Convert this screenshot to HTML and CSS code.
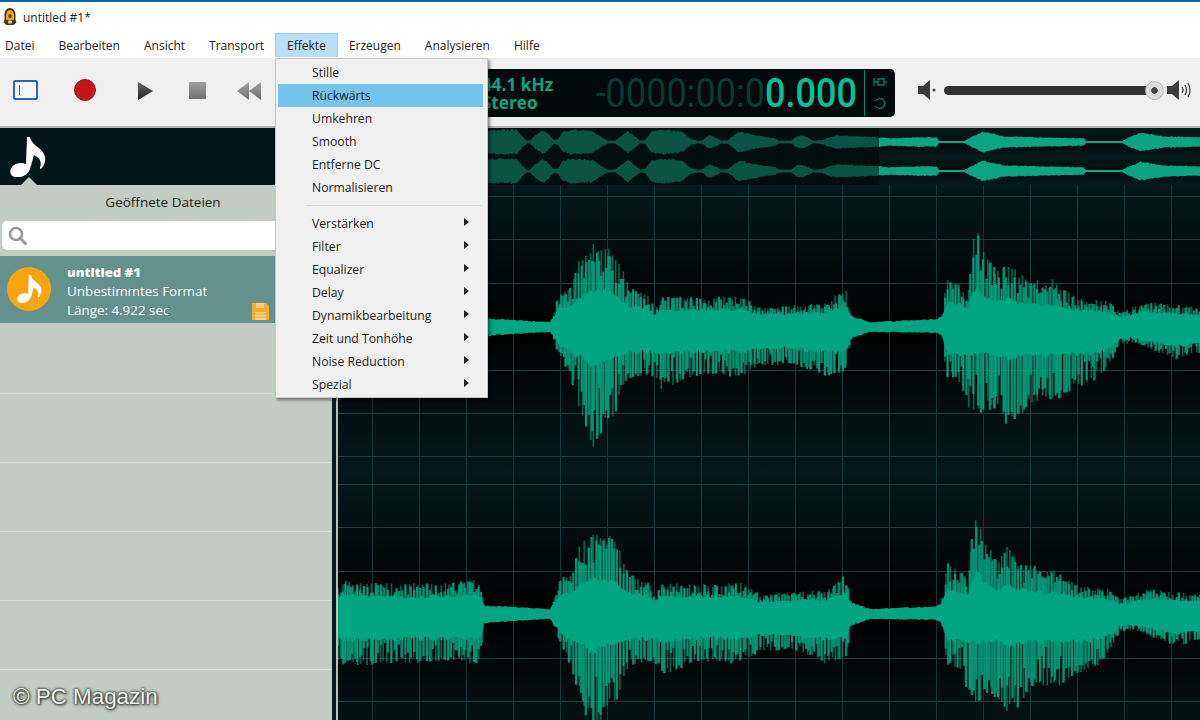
FILE: index.html
```html
<!DOCTYPE html>
<html lang="de">
<head>
  <meta charset="UTF-8">
  <title>untitled #1*</title>
  <link rel="stylesheet" href="styles.css">
</head>
<body>

  <div class="titlebar">
    <svg class="app-icon" viewBox="0 0 14 18">
      <path d="M7 0C3.500 0 1.500 3 1.500 7v5L.5 14.500l3 2.500h7l3-2.500-1-2.500V7C12.500 3 10.500 0 7 0z" fill="#4a3414"/>
      <path d="M3 8c0-3 1.500-6 4-6s4 3 4 6v4H3z" fill="#eaa924"/>
      <rect x="5.500" y="6" width="3" height="4" rx="1.500" fill="#4a3415"/>
      <rect x="5" y="12.500" width="4" height="3" rx="1" fill="#eccf95"/>
    </svg>
    <span>untitled #1*</span>
  </div>

  <nav class="menubar">
    <div class="menu-item">Datei</div>
    <div class="menu-item">Bearbeiten</div>
    <div class="menu-item">Ansicht</div>
    <div class="menu-item">Transport</div>
    <div class="menu-item active">Effekte</div>
    <div class="menu-item">Erzeugen</div>
    <div class="menu-item">Analysieren</div>
    <div class="menu-item">Hilfe</div>
  </nav>

  <div class="toolbar">
    <div class="sidebar-toggle"></div>
    <div class="btn-record"></div>
    <svg class="btn-play" viewBox="0 0 15 18"><path d="M0 0l15 9L0 18z" fill="url(#dark)"/></svg>
    <div class="btn-stop"></div>
    <svg class="btn-rewind" viewBox="0 0 24 18"><path d="M12 0v18L0 9zM24 0v18L12 9z" fill="url(#grey)"/></svg>

    <div class="lcd">
      <div class="lcd-format">44.1 kHz<br>Stereo</div>
      <div class="lcd-time"><div class="digits"><span class="dim">-0000:00:0</span><span class="lit">0.000</span></div></div>
      <div class="lcd-side">
        <svg viewBox="0 0 14 12" width="14" height="12"><path d="M1 2v8M1 6h4M5 3h6v6H5zM11 6h3" stroke="#0b7c62" stroke-width="1.400" fill="none"/></svg>
        <svg viewBox="0 0 14 14" width="14" height="14"><path d="M9 2.500a5 5 0 1 1-5 0" stroke="#0b7c62" stroke-width="1.400" fill="none" transform="rotate(-90 7 7)"/></svg>
      </div>
    </div>

    <div class="volume">
      <svg class="speaker" viewBox="0 0 18 20"><path d="M0 6h5l7-6v20l-7-6H0z" fill="#3c3c3c"/><circle cx="16" cy="10" r="1.500" fill="#3c3c3c"/></svg>
      <div class="slider"><div class="knob"></div></div>
      <svg class="speaker-loud" viewBox="0 0 24 20"><path d="M0 6h5l7-6v20l-7-6H0z" fill="#3c3c3c"/><path d="M15 7q2 3 0 6M18 5q3 5 0 10M21 3q4 7 0 14" stroke="#3c3c3c" stroke-width="1.300" fill="none"/></svg>
    </div>
  </div>

  <div class="workspace">
    <aside class="sidebar">
      <div class="sidebar-head">
        <svg class="note" viewBox="0 0 36 40"><path d="M17 0h3c1 5 5 8 10 12 6 5 7 12 2 19-1 1-2 1-2 0 2-6 0-10-6-13l-4 14c-2 6-8 9-15 8C0 39-1 34 2 30c3-4 9-5 14-3z" fill="#fff"/></svg>
      </div>
      <h2 class="sidebar-title">Geöffnete Dateien</h2>
      <div class="search">
        <svg viewBox="0 0 20 20" width="20" height="20"><circle cx="8" cy="8" r="6" stroke="#9a9a9a" stroke-width="2.600" fill="none"/><path d="M12.500 12.500l6 6" stroke="#9a9a9a" stroke-width="3"/></svg>
      </div>
      <div class="file-row selected">
        <div class="avatar">
          <svg viewBox="0 0 36 40" width="25" height="28"><path d="M17 0h3c1 5 5 8 10 12 6 5 7 12 2 19-1 1-2 1-2 0 2-6 0-10-6-13l-4 14c-2 6-8 9-15 8C0 39-1 34 2 30c3-4 9-5 14-3z" fill="#fff"/></svg>
        </div>
        <div class="file-text">
          <strong>untitled #1</strong>
          <span>Unbestimmtes Format</span>
          <span>Länge: 4.922 sec</span>
        </div>
        <svg class="floppy" viewBox="0 0 17 17"><path d="M0 0h14l3 3v14H0z" fill="#f2ab32"/><path d="M4 0h8v5H4zM3 9h11v8H3z" fill="#fbd28a"/><path d="M3 11h11M3 14h11" stroke="#f2ab32"/></svg>
      </div>
      <div class="file-row"></div>
      <div class="file-row"></div>
      <div class="file-row"></div>
      <div class="file-row"></div>
      <div class="file-row"></div>
      <div class="watermark">© PC Magazin</div>
    </aside>

    <main class="editor">
      <div class="overview">
        <div class="overview-dim"><svg id="overview-a" width="392" height="57"></svg></div>
        <div class="overview-lit"><svg id="overview-b" width="321" height="57"></svg></div>
      </div>
      <div class="channel"><svg id="wave-1" width="862" height="285"></svg></div>
      <div class="channel second"><svg id="wave-2" width="862" height="285"></svg></div>
    </main>
  </div>

  <div class="effects-menu">
    <div class="entry">Stille</div>
    <div class="entry hover">Rückwärts</div>
    <div class="entry">Umkehren</div>
    <div class="entry">Smooth</div>
    <div class="entry">Entferne DC</div>
    <div class="entry">Normalisieren</div>
    <div class="separator"></div>
    <div class="entry sub">Verstärken</div>
    <div class="entry sub">Filter</div>
    <div class="entry sub">Equalizer</div>
    <div class="entry sub">Delay</div>
    <div class="entry sub">Dynamikbearbeitung</div>
    <div class="entry sub">Zeit und Tonhöhe</div>
    <div class="entry sub">Noise Reduction</div>
    <div class="entry sub">Spezial</div>
  </div>

  <svg width="0" height="0" class="defs">
    <defs>
      <linearGradient id="dark" x1="0" y1="0" x2="0" y2="1"><stop offset="0" stop-color="#666"/><stop offset="1" stop-color="#222"/></linearGradient>
      <linearGradient id="grey" x1="0" y1="0" x2="0" y2="1"><stop offset="0" stop-color="#a2a2a2"/><stop offset="1" stop-color="#6e6e6e"/></linearGradient>
    </defs>
  </svg>

  <script src="script.js"></script>
</body>
</html>
```

FILE: styles.css
```css
* {
  box-sizing: border-box;
}

html, body {
  height: 720px;
  overflow: hidden;
}

body {
  margin: 0;
  font-family: "Open Sans", "Noto Sans", sans-serif;
  font-size: 12px;
  color: #222;
  background: #fff;
  display: flex;
  flex-direction: column;
  position: relative;
}

.defs {
  position: absolute;
}

.titlebar {
  height: 32px;
  border-top: 2px solid #0b66ae;
  display: flex;
  align-items: center;
  padding-left: 3px;
  gap: 6px;
}

.app-icon {
  width: 14px;
  height: 18px;
}

.menubar {
  height: 26px;
  display: flex;
}

.menu-item {
  padding: 0 12px;
  line-height: 27px;
}

.menu-item:first-child {
  padding-left: 5px;
}

.menu-item.active {
  height: 24px;
  margin: 1px -1px 0 -1px;
  background: #b9def5;
  border: 1px solid #93cbee;
  border-bottom-color: #b9def5;
  line-height: 24px;
  padding: 0 11px;
}

.toolbar {
  height: 70px;
  background: #f0f0f0;
  border-bottom: 2px solid #b2b2b2;
  display: flex;
  align-items: center;
  padding-left: 13px;
  position: relative;
}

.sidebar-toggle {
  width: 25px;
  height: 20px;
  border: 2px solid #2e62c4;
  border-radius: 2px;
  background: linear-gradient(#2e62c4, #2e62c4) 4px 3px / 1px 10px no-repeat, #f4f6fb;
  margin-bottom: 4px;
}

.btn-record {
  width: 22px;
  height: 22px;
  border-radius: 50%;
  background: #c3161b;
  border: 1px solid #a81015;
  margin: 0 0 4px 36px;
}

.btn-play {
  width: 15px;
  height: 18px;
  margin: 0 0 3px 42px;
}

.btn-stop {
  width: 17px;
  height: 17px;
  background: linear-gradient(#a0a0a0, #707070);
  margin: 0 0 3px 36px;
}

.btn-rewind {
  width: 24px;
  height: 18px;
  margin: 0 0 3px 31px;
}

.lcd {
  width: 420px;
  height: 48px;
  margin: 2px 0 0 214px;
  background: #020a0c;
  border-radius: 5px;
  display: flex;
  align-items: center;
  color: #0aa582;
  overflow: hidden;
}

.lcd-format {
  width: 100px;
  padding-left: 7px;
  font-size: 18px;
  font-weight: 700;
  line-height: 18px;
  white-space: nowrap;
  transform: scaleX(.96);
  transform-origin: left center;
}

.lcd-time {
  flex: 1;
  display: flex;
  justify-content: flex-end;
  padding-right: 7px;
  min-width: 0;
}

.digits {
  font-family: "Roboto", sans-serif;
  font-size: 41px;
  white-space: nowrap;
  transform: scaleX(.88);
  transform-origin: right center;
}

.digits .dim {
  color: #0c3a33;
}

.digits .lit {
  color: #07c196;
  font-weight: 500;
}

.lcd-side {
  width: 31px;
  height: 46px;
  border-left: 1px solid #0b8468;
  display: flex;
  flex-direction: column;
  align-items: center;
  justify-content: center;
  gap: 8px;
}

.volume {
  display: flex;
  align-items: center;
  margin: 0 0 4px 23px;
}

.speaker {
  width: 18px;
  height: 20px;
}

.slider {
  width: 212px;
  height: 9px;
  margin: 0 11px 0 8px;
  background: #333;
  border-radius: 5px;
  position: relative;
}

.knob {
  position: absolute;
  right: -8px;
  top: -5px;
  width: 19px;
  height: 19px;
  border-radius: 50%;
  background: radial-gradient(circle, #444 0 3px, #d6d6d6 3.5px, #e6e6e6 100%);
  border: 1px solid #b4b4b4;
}

.speaker-loud {
  width: 24px;
  height: 20px;
}

.workspace {
  flex: 1;
  display: flex;
  min-height: 0;
}

.sidebar {
  width: 336px;
  flex: none;
  background: #c3ccc4;
  border-right: 4px solid #0e1a1a;
  position: relative;
}

.sidebar-head {
  height: 57px;
  background: #03171b;
  padding: 9px 0 0 10px;
  position: relative;
}

.sidebar-head::after {
  content: "";
  position: absolute;
  left: 21px;
  bottom: 0;
  border: 8px solid transparent;
  border-top: 0;
  border-bottom-color: #c3ccc4;
}

.note {
  width: 36px;
  height: 40px;
  display: block;
}

.sidebar-title {
  margin: 0;
  height: 36px;
  line-height: 35px;
  text-align: center;
  font-size: 13.5px;
  font-weight: 400;
  padding-right: 6px;
}

.search {
  height: 29px;
  margin-left: 2px;
  width: 290px;
  background: #fff;
  border-radius: 5px;
  padding: 5px 0 0 6px;
}

.file-row {
  height: 69px;
  border-bottom: 1px solid #d5dcd5;
  position: relative;
}

.file-row.selected {
  height: 67px;
  margin: 6px 0 2px;
  background: #64908e;
  border-bottom: 0;
  color: #fff;
  display: flex;
  align-items: center;
}

.avatar {
  width: 44px;
  height: 44px;
  border-radius: 50%;
  background: #f7a411;
  margin: 0 0 1px 7px;
  display: flex;
  align-items: center;
  justify-content: center;
}

.file-text {
  margin-left: 16px;
  padding-top: 4px;
  display: flex;
  flex-direction: column;
  line-height: 19px;
  font-size: 13.4px;
}

.file-text strong {
  font-weight: 800;
  font-size: 13px;
}

.floppy {
  position: absolute;
  left: 252px;
  top: 47px;
  width: 17px;
  height: 17px;
}

.watermark {
  position: absolute;
  left: 13px;
  top: 556px;
  font-family: "Liberation Sans", sans-serif;
  font-size: 22.4px;
  color: #f2f4f2;
  text-shadow: 0 0 3px #333, 0 0 2px #333, 1px 1px 3px #333;
}

.editor {
  flex: 1;
  min-width: 0;
  border-left: 2px solid #b4c0ba;
  background: #000;
}

.overview {
  height: 57px;
  display: flex;
  padding-left: 149px;
}

.overview-dim {
  width: 392px;
  background: #01100f;
}

.overview-lit {
  width: 321px;
  background: linear-gradient(#031a1c, #010b0c 30%, #031a1c 50%, #010b0c 75%, #031a1c);
}

.overview svg, .channel svg {
  display: block;
}

.channel {
  height: 285px;
  background:
    repeating-linear-gradient(90deg, transparent 0 34px, #12393a 34px 35px, transparent 35px 47px),
    repeating-linear-gradient(180deg, transparent 0 11px, #16403f 11px 12px, transparent 12px 43.4px),
    linear-gradient(#03191b, #000 50%, #03191b);
}

.channel.second {
  background:
    repeating-linear-gradient(90deg, transparent 0 34px, #12393a 34px 35px, transparent 35px 47px),
    repeating-linear-gradient(180deg, transparent 0 14px, #16403f 14px 15px, transparent 15px 43.4px),
    linear-gradient(#03191b, #000 50%, #03191b);
}

.effects-menu {
  position: absolute;
  left: 275px;
  top: 58px;
  width: 213px;
  height: 340px;
  padding: 2px;
  background: #f0f0f0;
  border: 1px solid #c8c8c8;
  box-shadow: 2px 2px 3px rgba(0, 0, 0, .45);
  font-size: 12.2px;
}

.entry {
  height: 23px;
  line-height: 24px;
  padding-left: 34px;
  width: 205px;
  position: relative;
}

.entry.hover {
  background: #74c3ee;
}

.entry.sub::after {
  content: "";
  position: absolute;
  right: 14px;
  top: 6px;
  border: 4px solid transparent;
  border-left: 5px solid #222;
  border-right: 0;
}

.separator {
  height: 13px;
  margin: 0 1px 0 28px;
  width: 176px;
  border-bottom: 1px solid #dcdcdc;
  transform: translateY(-6px);
}
```

FILE: script.js
```js
// envelope points: [x on screen, amplitude up, amplitude down]
const ENVELOPE = [
  [338, 30, 46], [345, 34, 52], [400, 30, 50], [450, 32, 48], [475, 36, 50], [481, 30, 48],
  [484, 9, 10], [500, 8, 8], [550, 5, 5],
  [553, 10, 8], [557, 30, 24], [567, 41, 44], [573, 44, 60], [578, 66, 80], [593, 85, 123],
  [607, 81, 96], [617, 70, 86], [625, 53, 60], [630, 40, 52], [647, 36, 48], [655, 18, 50],
  [660, 31, 63], [700, 30, 48], [740, 32, 50], [760, 20, 38], [795, 22, 38], [826, 24, 50],
  [838, 34, 46], [846, 40, 45], [851, 12, 12], [870, 5, 5], [937, 8, 6], [942, 12, 10],
  [947, 54, 53], [960, 44, 56], [968, 34, 80], [972, 80, 85], [977, 105, 95], [983, 80, 83],
  [990, 67, 84], [997, 57, 86], [1007, 70, 100], [1017, 57, 95], [1027, 49, 80], [1037, 50, 76],
  [1043, 39, 73], [1053, 49, 72], [1060, 40, 73], [1077, 30, 61], [1093, 27, 56], [1107, 27, 43],
  [1120, 15, 18], [1133, 20, 16], [1147, 25, 21], [1177, 22, 33], [1200, 20, 26]
];

const OVERVIEW_DIM = [
  [0, 12], [4, 13], [30, 13], [35, 6], [40, 1.5], [43, 1.5], [48, 7], [56, 13], [62, 8], [67, 2],
  [71, 3], [76, 11], [85, 13], [105, 12], [115, 5], [121, 1.5], [128, 1.5], [134, 6], [141, 12],
  [148, 6], [153, 1.5], [158, 2], [165, 12], [180, 13], [195, 11], [204, 3], [211, 1.5], [216, 2],
  [220, 6], [224, 7], [230, 4], [234, 1.5], [241, 2], [247, 7], [252, 11], [270, 7], [288, 4],
  [292, 1.5], [304, 1.5], [310, 6], [315, 7], [322, 4], [326, 1.5], [335, 2], [342, 5], [350, 7],
  [392, 5]
];

const OVERVIEW_LIT = [
  [0, 5], [10, 4], [40, 5], [58, 5], [60, 1], [85, 1], [92, 5], [104, 11], [125, 6], [160, 5],
  [205, 4], [207, 1], [243, 1], [250, 5], [262, 10], [285, 6], [321, 5]
];

let seed = 12345;

function random() {
  seed = (seed * 16807) % 2147483647;
  return seed / 2147483647;
}

function lookup(table, x, col) {
  for (let i = 1; i < table.length; i++) {
    if (x <= table[i][0]) {
      const a = table[i - 1];
      const b = table[i];
      const t = (x - a[0]) / (b[0] - a[0]);
      return a[col] + (b[col] - a[col]) * t;
    }
  }
  return table[table.length - 1][col];
}

function addFill(svg, d, fill) {
  const path = document.createElementNS('http://www.w3.org/2000/svg', 'path');
  path.setAttribute('d', d);
  path.setAttribute('fill', fill);
  svg.appendChild(path);
}

function addBars(svg, d, width, opacity) {
  const path = document.createElementNS('http://www.w3.org/2000/svg', 'path');
  path.setAttribute('d', d);
  path.setAttribute('fill', 'none');
  path.setAttribute('stroke', '#06a582');
  path.setAttribute('stroke-width', width);
  path.setAttribute('stroke-opacity', opacity);
  svg.appendChild(path);
}

// one vertical bar for every spike, spaced unevenly like real audio
function bars(center, minStep, maxStep, lowUp, lowDown) {
  let d = '';
  let x = 338;
  while (x <= 1200) {
    const up = lookup(ENVELOPE, x, 1);
    const down = lookup(ENVELOPE, x, 2);
    const ku = lowUp + (1 - lowUp) * random();
    const kd = lowDown + (1 - lowDown) * Math.sqrt(random());
    const sx = (x - 338).toFixed(1);
    d += `M${sx} ${(center - up * ku).toFixed(1)}V${(center + down * kd).toFixed(1)}`;
    x += minStep + (maxStep - minStep) * random();
  }
  return d;
}

function core(center) {
  const upper = [];
  const lower = [];
  for (let x = 338; x <= 1200; x += 2) {
    const up = lookup(ENVELOPE, x, 1);
    const down = lookup(ENVELOPE, x, 2);
    // quiet parts stay a smooth band, loud parts keep a solid middle only
    const ru = up < 14 ? .95 : Math.max(.42, .72 - up * .005);
    const rd = down < 14 ? .95 : Math.max(.32, .75 - down * .005);
    const n = .9 + .2 * random();
    upper.push(`${x - 338} ${(center - up * ru * n).toFixed(1)}`);
    lower.unshift(`${x - 338} ${(center + down * rd * n).toFixed(1)}`);
  }
  return 'M' + upper.concat(lower).join('L') + 'Z';
}

function drawWave(id, center) {
  const svg = document.getElementById(id);
  addBars(svg, bars(center, 2.5, 5.5, .85, .8), 1.6, .6);
  addBars(svg, bars(center, 1.6, 3.5, .6, .45), 2.2, .85);
  addFill(svg, core(center), '#02a582');
}

function drawOverview(id, table, centers, color) {
  const svg = document.getElementById(id);
  const width = Number(svg.getAttribute('width'));
  centers.forEach(center => {
    const upper = [];
    const lower = [];
    for (let x = 0; x <= width; x++) {
      const amp = lookup(table, x, 1);
      upper.push(`${x} ${(center - amp * (.85 + .15 * random())).toFixed(1)}`);
      lower.unshift(`${x} ${(center + amp * (.85 + .15 * random())).toFixed(1)}`);
    }
    addFill(svg, 'M' + upper.concat(lower).join('L') + 'Z', color);
  });
}

drawWave('wave-1', 142);
drawWave('wave-2', 144);
drawOverview('overview-a', OVERVIEW_DIM, [14, 43], '#0b5342');
drawOverview('overview-b', OVERVIEW_LIT, [14, 43], '#0ba583');
```
